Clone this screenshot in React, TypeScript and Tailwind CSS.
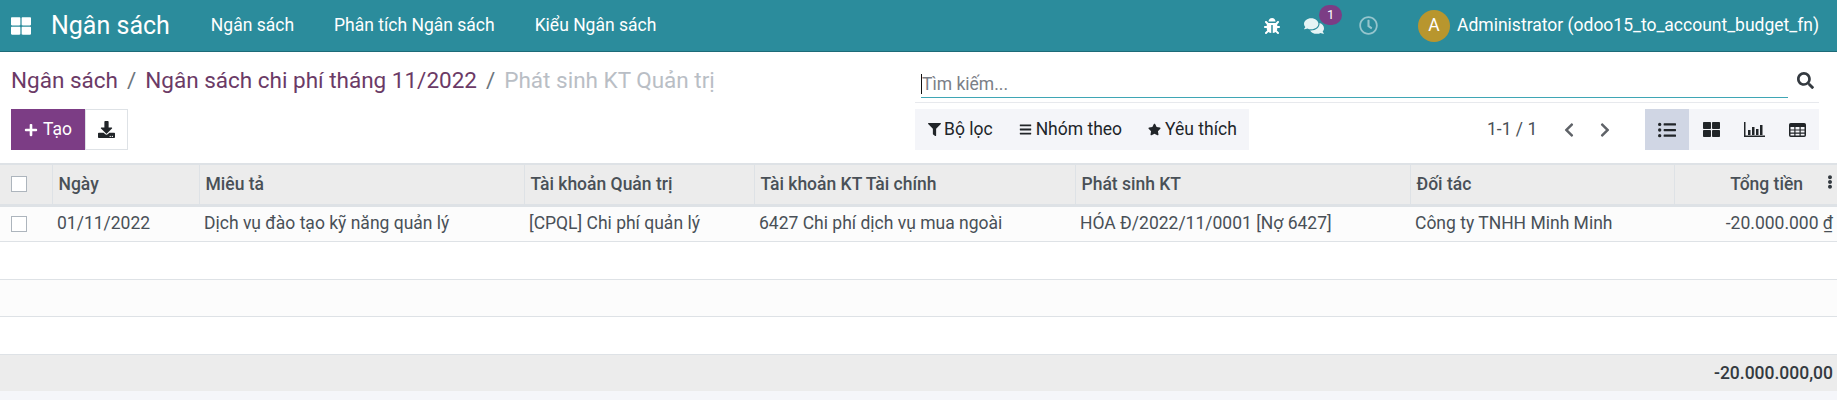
import { FaBars, FaBug, FaChevronLeft, FaChevronRight, FaComments, FaDownload, FaEllipsisV, FaFilter, FaListUl, FaPlus, FaRegClock, FaSearch, FaStar, FaThLarge } from "react-icons/fa";

const columns = [
  { label: "Ngày", width: "w-[147px]" },
  { label: "Miêu tả", width: "w-[325px]" },
  { label: "Tài khoản Quản trị", width: "w-[230px]" },
  { label: "Tài khoản KT Tài chính", width: "w-[321px]" },
  { label: "Phát sinh KT", width: "w-[335px]" },
  { label: "Đối tác", width: "w-[264px]" },
];

const row = [
  "01/11/2022",
  "Dịch vụ đào tạo kỹ năng quản lý",
  "[CPQL] Chi phí quản lý",
  "6427 Chi phí dịch vụ mua ngoài",
  "HÓA Đ/2022/11/0001 [Nợ 6427]",
  "Công ty TNHH Minh Minh",
];

function ChartIcon() {
  return (
    <svg width="21" height="15" viewBox="0 0 21 15" fill="currentColor">
      <path d="M0 0h1.5v13.5H21V15H0z" />
      <rect x="4" y="8" width="2.5" height="5" />
      <rect x="8" y="5" width="2.5" height="8" />
      <rect x="12" y="7" width="2.5" height="6" />
      <rect x="16" y="3" width="2.5" height="10" />
    </svg>
  );
}

function TableIcon() {
  return (
    <svg width="17" height="14" viewBox="0 0 17 14" fill="none" stroke="currentColor">
      <rect x="0.75" y="0.75" width="15.5" height="12.5" rx="1" strokeWidth="1.5" />
      <rect x="1" y="1" width="15" height="3" fill="currentColor" stroke="none" />
      <path d="M1 7h15M1 10.2h15M5.9 3v10M11.1 3v10" strokeWidth="1.2" />
    </svg>
  );
}

function Navbar() {
  return (
    <nav className="flex h-[52px] items-center border-b border-[#1d6b78] bg-[#2b8c9c] text-white">
      <FaThLarge className="ml-[11px] text-[20px]" />
      <span className="ml-[20px] text-[25px]">Ngân sách</span>
      <div className="ml-[41px] flex gap-[40px] text-[17.5px]">
        <span>Ngân sách</span>
        <span>Phân tích Ngân sách</span>
        <span>Kiểu Ngân sách</span>
      </div>
      <div className="ml-auto flex items-center pr-[18px]">
        <FaBug className="text-[16px]" />
        <div className="relative ml-[24px]">
          <FaComments className="text-[20px] text-[#e6f4f5]" />
          <span className="absolute -top-[11px] left-[15px] flex h-[20px] w-[23px] items-center justify-center rounded-full bg-[#7c3d85] text-[13px]">1</span>
        </div>
        <FaRegClock className="ml-[35px] text-[19px] opacity-50" />
        <span className="ml-[40px] flex h-[32px] w-[32px] items-center justify-center rounded-full bg-[#b8962e] text-[17.5px]">A</span>
        <span className="ml-[7px] text-[17.5px]">Administrator (odoo15_to_account_budget_fn)</span>
      </div>
    </nav>
  );
}

function ControlPanel() {
  return (
    <div className="flex h-[111px]">
      <div className="w-[915px] pl-[11px]">
        <div className="flex h-[57px] items-center gap-[9px] text-[22.5px] text-[#6b3a66]">
          <span>Ngân sách</span>
          <span className="text-[#6c757d]">/</span>
          <span>Ngân sách chi phí tháng 11/2022</span>
          <span className="text-[#6c757d]">/</span>
          <span className="text-[#b9bec5]">Phát sinh KT Quản trị</span>
        </div>
        <div className="flex h-[41px]">
          <button className="flex w-[74px] items-center justify-center gap-[5px] bg-[#7c3d85] text-[17.5px] text-white">
            <FaPlus className="text-[14px]" />
            Tạo
          </button>
          <button className="flex w-[43px] items-center justify-center border border-[#dee2e6] bg-white text-[#212529]">
            <FaDownload className="text-[17px]" />
          </button>
        </div>
      </div>
      <div className="w-[904px]">
        <div className="h-[51px] border-b border-[#e7e9ed]">
          <div className="flex h-[46px]">
            <div className="ml-[6px] flex h-[46px] flex-1 items-end border-b border-[#3fa6b5] pb-[3px]">
              <span className="h-[20px] w-px bg-[#111111]" />
              <span className="text-[17.5px] leading-[20px] text-[#7b8087]">Tìm kiếm...</span>
            </div>
            <div className="flex w-[31px] items-end justify-end pr-[5px] pb-[9px]">
              <FaSearch className="text-[17px] text-[#343a40]" />
            </div>
          </div>
        </div>
        <div className="mt-[6px] flex h-[41px] items-stretch">
          <div className="flex w-[334px] items-center bg-[#f4f5f9] pl-[13px] text-[17.5px] text-[#212529]">
            <FaFilter className="text-[13px]" />
            <span className="ml-[3px]">Bộ lọc</span>
            <FaBars className="ml-[26px] text-[13px]" />
            <span className="ml-[4px]">Nhóm theo</span>
            <FaStar className="ml-[26px] text-[13px]" />
            <span className="ml-[4px]">Yêu thích</span>
          </div>
          <span className="ml-[238px] flex items-center text-[17.5px] text-[#495057]">1-1 / 1</span>
          <div className="ml-[24px] flex items-center gap-[20px] text-[16px] text-[#5f6368]">
            <FaChevronLeft />
            <FaChevronRight />
          </div>
          <div className="ml-auto flex w-[174px] items-stretch bg-[#f4f5f9] text-[#212529]">
            <span className="flex w-[44px] items-center justify-center bg-[#d0d6e4]"><FaListUl className="text-[18px]" /></span>
            <span className="flex w-[44px] items-center justify-center"><FaThLarge className="text-[17px]" /></span>
            <span className="flex w-[43px] items-center justify-center"><ChartIcon /></span>
            <span className="flex w-[43px] items-center justify-center"><TableIcon /></span>
          </div>
        </div>
      </div>
    </div>
  );
}

function Checkbox() {
  return <span className="block h-[16px] w-[16px] border border-[#adb5bd] bg-white" />;
}

function DataTable() {
  return (
    <table className="w-[1837px] table-fixed border-collapse text-[17.5px] text-[#495057]">
      <colgroup>
        <col className="w-[52px]" />
        {columns.map((c) => (
          <col key={c.label} className={c.width} />
        ))}
        <col />
      </colgroup>
      <thead>
        <tr className="h-[41px] border-t-2 border-b-[3px] border-t-[#dee2e6] border-b-[#dee2e6] bg-[#ececec]">
          <th className="border-r border-[#dee2e6] pl-[11px] text-left font-normal"><Checkbox /></th>
          {columns.map((c) => (
            <th key={c.label} className="border-r border-[#dee2e6] pl-[6px] text-left font-medium">{c.label}</th>
          ))}
          <th className="relative pr-[34px] text-right font-medium">
            Tổng tiền
            <FaEllipsisV className="absolute top-[10px] right-0 text-[14px] text-[#343a40]" />
          </th>
        </tr>
      </thead>
      <tbody>
        <tr className="h-[36px] border-b border-[#dee2e6] bg-[#fcfcfc]">
          <td className="pl-[11px]"><Checkbox /></td>
          {row.map((cell) => (
            <td key={cell} className="truncate pl-[5px]">{cell}</td>
          ))}
          <td className="pr-[4px] text-right">-20.000.000 ₫</td>
        </tr>
        <tr className="h-[38px] border-b border-[#dee2e6] bg-white"><td colSpan={8} /></tr>
        <tr className="h-[37px] border-b border-[#dee2e6] bg-[#fcfcfc]"><td colSpan={8} /></tr>
        <tr className="h-[38px] border-b border-[#dee2e6] bg-white"><td colSpan={8} /></tr>
      </tbody>
      <tfoot>
        <tr className="h-[37px] bg-[#ececec]">
          <td colSpan={8} className="pr-[4px] text-right font-medium text-[#343a40]">-20.000.000,00</td>
        </tr>
      </tfoot>
    </table>
  );
}

export default function App() {
  return (
    <div className="h-[400px] overflow-hidden bg-[#f5f6fa] font-['Roboto',sans-serif]">
      <Navbar />
      <div className="bg-white">
        <ControlPanel />
      </div>
      <DataTable />
    </div>
  );
}
